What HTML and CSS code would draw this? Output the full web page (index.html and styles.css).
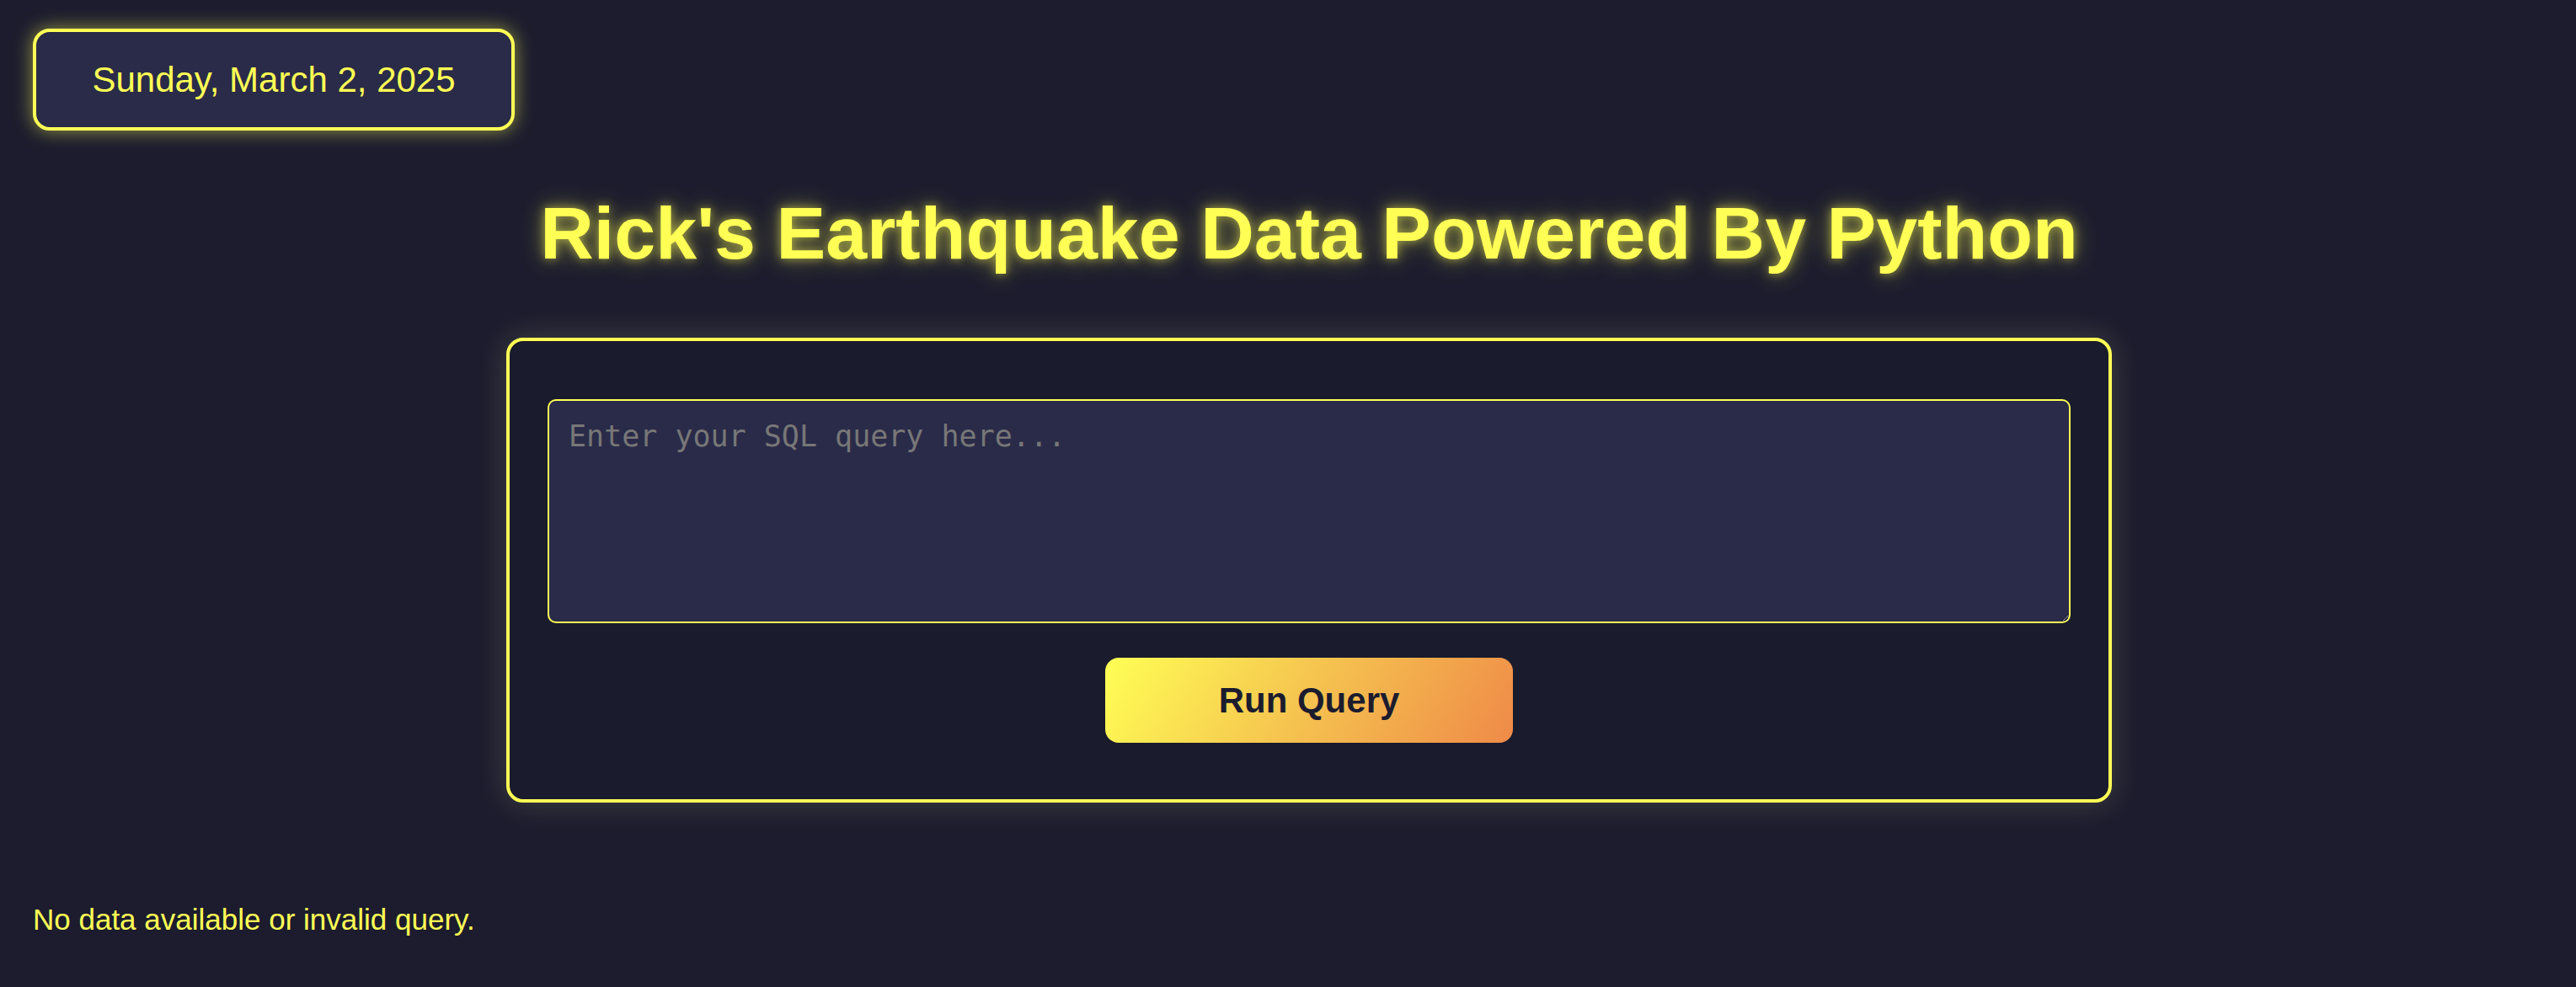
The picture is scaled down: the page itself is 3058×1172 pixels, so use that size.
FILE: index.html
```html
<!DOCTYPE html>
<html lang="en">
<head>
<meta charset="utf-8">
<title>Rick's Earthquake Data Powered By Python</title>
<link rel="stylesheet" href="styles.css">
</head>
<body>
  <div class="date-box">Sunday, March 2, 2025</div>
  <div class="hero">
    <h1 class="title">Rick's Earthquake Data Powered By Python</h1>
    <div class="panel">
      <textarea class="query" placeholder="Enter your SQL query here..."></textarea>
      <button class="run-btn" type="button">Run Query</button>
    </div>
  </div>
  <p class="status">No data available or invalid query.</p>
</body>
</html>
```

FILE: styles.css
```css
html, body {
  margin: 0;
  background: #1c1c2e;
}

body {
  padding: 34px 0 0 39px;
  font-family: "Liberation Sans", Arial, sans-serif;
  color: #ffff55;
  min-height: 1172px;
  box-sizing: border-box;
}

.date-box {
  display: inline-block;
  box-sizing: border-box;
  width: 572px;
  padding: 32px 0;
  border: 4px solid #ffff55;
  border-radius: 20px;
  background: #2a2b48;
  color: #ffff55;
  font-size: 42px;
  line-height: 49px;
  text-align: center;
  box-shadow: 0 0 22px rgba(255, 255, 85, 0.55);
}

.hero {
  padding-left: 11px;
}

.title {
  margin: 71px 0 0;
  font-size: 88px;
  line-height: 101px;
  font-weight: bold;
  text-align: center;
  color: #ffff55;
  text-shadow: 0 0 12px rgba(255, 255, 85, 0.55), 0 0 28px rgba(255, 255, 85, 0.45);
}

.panel {
  box-sizing: border-box;
  width: 1906px;
  margin: 74px auto 0;
  padding: 69px 45px 67px;
  border: 4px solid #ffff55;
  border-radius: 20px;
  background: #1a1b2c;
  box-shadow: 0 0 36px rgba(255, 255, 180, 0.18);
  display: flex;
  flex-direction: column;
  align-items: center;
}

.query {
  display: block;
  box-sizing: border-box;
  width: 100%;
  height: 266px;
  margin: 0;
  padding: 22px 23px;
  border: 2px solid #ffff55;
  border-radius: 10px;
  background: #2a2b49;
  color: #dddddd;
  font-family: "DejaVu Sans Mono", monospace;
  font-size: 35px;
  outline: none;
}

.query::placeholder {
  color: #777777;
}

.run-btn {
  box-sizing: border-box;
  width: 484px;
  height: 101px;
  margin-top: 41px;
  border: none;
  border-radius: 16px;
  background: linear-gradient(120deg, #ffff55 0%, #f5c24f 50%, #ef8a48 100%);
  color: #1c1c2e;
  font-family: "Liberation Sans", Arial, sans-serif;
  font-weight: bold;
  font-size: 42px;
  cursor: pointer;
}

.status {
  margin: 119px 0 0;
  font-size: 35px;
  line-height: 40px;
  color: #ffff55;
}
```
